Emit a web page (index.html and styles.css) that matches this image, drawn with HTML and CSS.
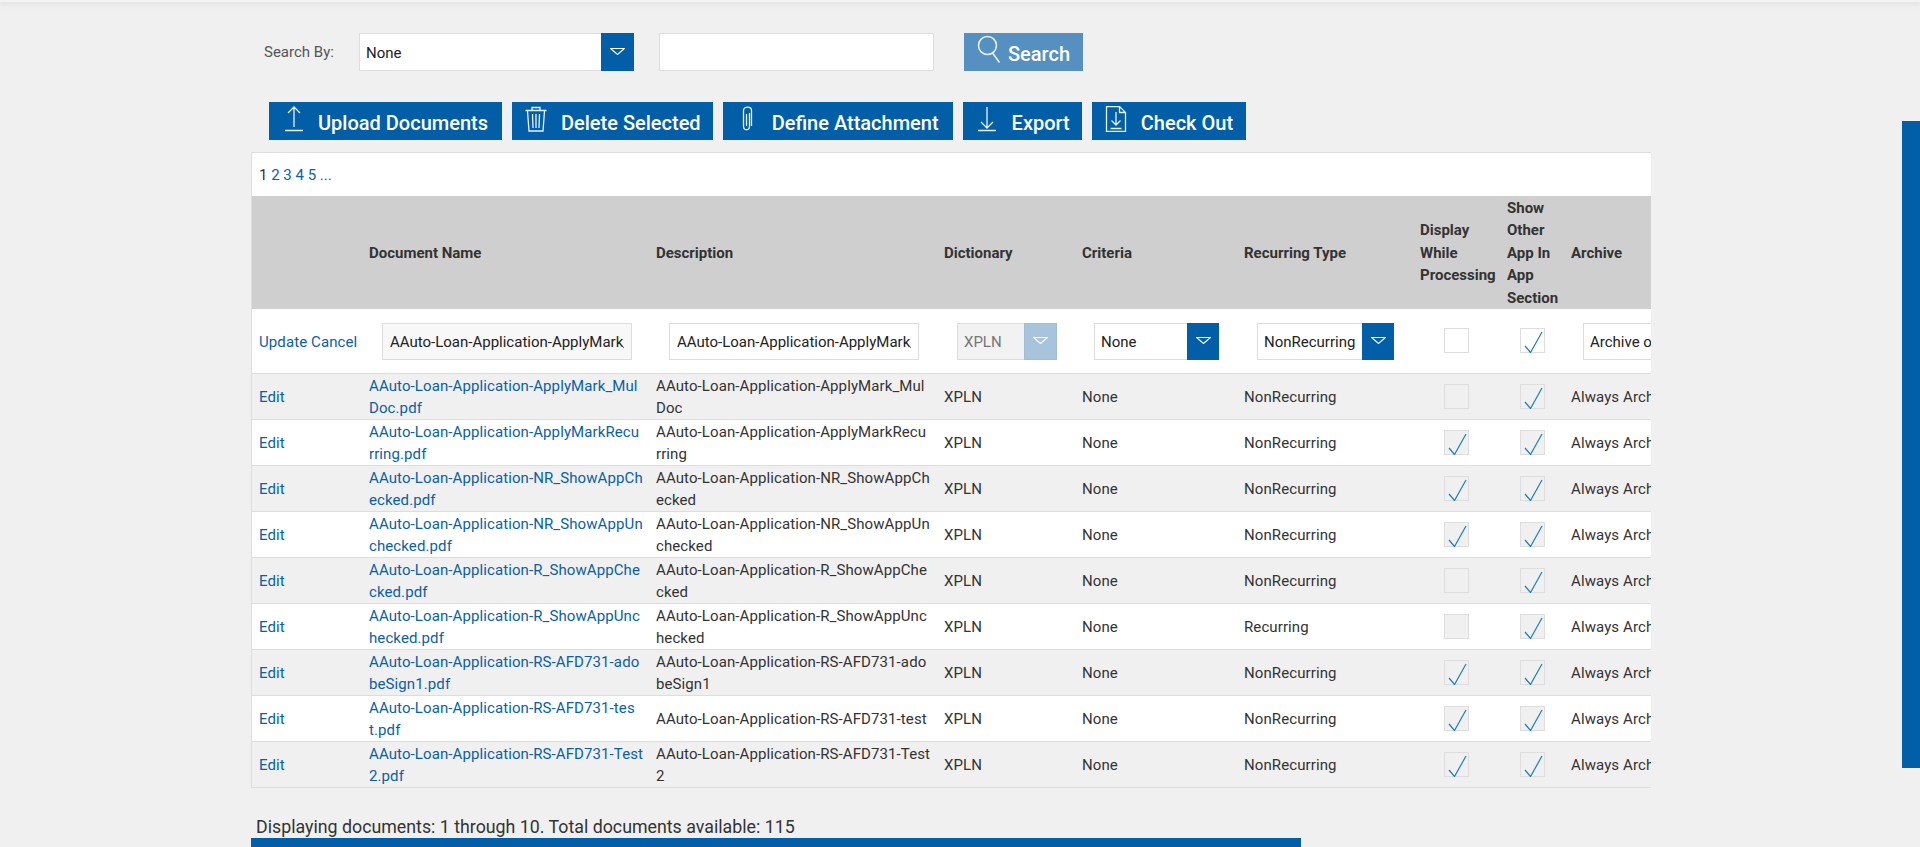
FILE: index.html
```html
<!DOCTYPE html>
<html lang="en">
<head>
<meta charset="utf-8">
<title>Documents</title>
<link rel="stylesheet" href="styles.css">
</head>
<body>
<div class="topbar"></div>
<div class="vscroll"></div>
<main class="main">
  <form class="search-row">
    <span class="search-label">Search By:</span>
    <div class="select select-search"><span class="select-text">None</span><span class="select-arrow"><svg class="tri" viewBox="0 0 15 7"><path d="M.5.5h14L7.500 6.500z"/></svg></span></div>
    <input class="text-input search-input" type="text">
    <button class="btn btn-search" type="button"><svg class="search-icon" viewBox="0 0 24 28"><circle cx="10.500" cy="10.500" r="9"/><path d="M15.500 18l7 9.500"/></svg><span>Search</span></button>
  </form>

  <div class="toolbar">
    <button class="btn btn-action btn-wide" type="button"><span class="slot"><svg viewBox="0 0 26 26"><path d="M13 1v20M7 7l6-6 6 6M4 24.500h18"/></svg></span><span>Upload Documents</span></button>
    <button class="btn btn-action" type="button"><span class="slot"><svg viewBox="0 0 26 26"><path d="M2.500 4.500h21M9 4V1.500h8V4M4.500 5l1.500 20h14l1.500-20M9.500 8l.5 14M13 8v14M16.500 8l-.5 14"/></svg></span><span>Delete Selected</span></button>
    <button class="btn btn-action btn-wide" type="button"><span class="slot"><svg viewBox="0 0 26 26"><path d="M15.500 7v13c0 5-6 5-6 0V4.500c0-4.500 8-4.500 8 0V20M12.500 8v12"/></svg></span><span>Define Attachment</span></button>
    <button class="btn btn-action" type="button"><span class="slot"><svg viewBox="0 0 26 26"><path d="M13 1v21M7 16l6 6 6-6M4 24.500h18"/></svg></span><span>Export</span></button>
    <button class="btn btn-action" type="button"><span class="slot"><svg viewBox="0 0 26 26"><path d="M3.500 25.500V.5h13l6 6v19zM16.500.5v6h6M13 6v13M8.500 14.500L13 19l4.500-4.500M7.500 22.500h11"/></svg></span><span>Check Out</span></button>
  </div>

  <section class="panel">
    <div class="pager"><span>1</span> <a href="#">2</a> <a href="#">3</a> <a href="#">4</a> <a href="#">5</a> <a href="#">...</a></div>
    <table class="grid">
      <colgroup>
        <col class="c-act"><col class="c-name"><col class="c-desc"><col class="c-dict"><col class="c-crit"><col class="c-rec"><col class="c-disp"><col class="c-show"><col class="c-arch">
      </colgroup>
      <thead>
        <tr>
          <th></th><th>Document Name</th><th>Description</th><th>Dictionary</th><th>Criteria</th><th>Recurring Type</th><th>Display While Processing</th><th>Show Other App In App Section</th><th>Archive</th>
        </tr>
      </thead>
      <tbody>
        <tr class="edit-row">
          <td><a href="#">Update</a> <a href="#">Cancel</a></td>
          <td><input class="text-input cell-input input-tint" type="text" value="AAuto-Loan-Application-ApplyMark_MulDoc"></td>
          <td><input class="text-input cell-input" type="text" value="AAuto-Loan-Application-ApplyMark_MulDoc"></td>
          <td><div class="select select-dict is-disabled"><span class="select-text">XPLN</span><span class="select-arrow"><svg class="tri" viewBox="0 0 15 7"><path d="M.5.5h14L7.500 6.500z"/></svg></span></div></td>
          <td><div class="select select-crit"><span class="select-text">None</span><span class="select-arrow"><svg class="tri" viewBox="0 0 15 7"><path d="M.5.5h14L7.500 6.500z"/></svg></span></div></td>
          <td><div class="select select-rec"><span class="select-text">NonRecurring</span><span class="select-arrow"><svg class="tri" viewBox="0 0 15 7"><path d="M.5.5h14L7.500 6.500z"/></svg></span></div></td>
          <td class="center"><span class="check check-open"></span></td>
          <td class="center"><span class="check check-open"><svg class="tick" viewBox="0 0 25 25"><path d="M5 18l5.500 6.500L22 4"/></svg></span></td>
          <td><div class="select select-arch"><span class="select-text">Archive on Completion</span></div></td>
        </tr>
        <tr>
          <td><a href="#">Edit</a></td><td class="nowrap"><a href="#">AAuto-Loan-Application-ApplyMark_Mul<br>Doc.pdf</a></td><td class="nowrap">AAuto-Loan-Application-ApplyMark_Mul<br>Doc</td><td>XPLN</td><td>None</td><td>NonRecurring</td>
          <td class="center"><span class="check"></span></td>
          <td class="center"><span class="check"><svg class="tick" viewBox="0 0 25 25"><path d="M5 18l5.500 6.500L22 4"/></svg></span></td>
          <td class="nowrap">Always Archive</td>
        </tr>
        <tr>
          <td><a href="#">Edit</a></td><td class="nowrap"><a href="#">AAuto-Loan-Application-ApplyMarkRecu<br>rring.pdf</a></td><td class="nowrap">AAuto-Loan-Application-ApplyMarkRecu<br>rring</td><td>XPLN</td><td>None</td><td>NonRecurring</td>
          <td class="center"><span class="check"><svg class="tick" viewBox="0 0 25 25"><path d="M5 18l5.500 6.500L22 4"/></svg></span></td>
          <td class="center"><span class="check"><svg class="tick" viewBox="0 0 25 25"><path d="M5 18l5.500 6.500L22 4"/></svg></span></td>
          <td class="nowrap">Always Archive</td>
        </tr>
        <tr>
          <td><a href="#">Edit</a></td><td class="nowrap"><a href="#">AAuto-Loan-Application-NR_ShowAppCh<br>ecked.pdf</a></td><td class="nowrap">AAuto-Loan-Application-NR_ShowAppCh<br>ecked</td><td>XPLN</td><td>None</td><td>NonRecurring</td>
          <td class="center"><span class="check"><svg class="tick" viewBox="0 0 25 25"><path d="M5 18l5.500 6.500L22 4"/></svg></span></td>
          <td class="center"><span class="check"><svg class="tick" viewBox="0 0 25 25"><path d="M5 18l5.500 6.500L22 4"/></svg></span></td>
          <td class="nowrap">Always Archive</td>
        </tr>
        <tr>
          <td><a href="#">Edit</a></td><td class="nowrap"><a href="#">AAuto-Loan-Application-NR_ShowAppUn<br>checked.pdf</a></td><td class="nowrap">AAuto-Loan-Application-NR_ShowAppUn<br>checked</td><td>XPLN</td><td>None</td><td>NonRecurring</td>
          <td class="center"><span class="check"><svg class="tick" viewBox="0 0 25 25"><path d="M5 18l5.500 6.500L22 4"/></svg></span></td>
          <td class="center"><span class="check"><svg class="tick" viewBox="0 0 25 25"><path d="M5 18l5.500 6.500L22 4"/></svg></span></td>
          <td class="nowrap">Always Archive</td>
        </tr>
        <tr>
          <td><a href="#">Edit</a></td><td class="nowrap"><a href="#">AAuto-Loan-Application-R_ShowAppChe<br>cked.pdf</a></td><td class="nowrap">AAuto-Loan-Application-R_ShowAppChe<br>cked</td><td>XPLN</td><td>None</td><td>NonRecurring</td>
          <td class="center"><span class="check"></span></td>
          <td class="center"><span class="check"><svg class="tick" viewBox="0 0 25 25"><path d="M5 18l5.500 6.500L22 4"/></svg></span></td>
          <td class="nowrap">Always Archive</td>
        </tr>
        <tr>
          <td><a href="#">Edit</a></td><td class="nowrap"><a href="#">AAuto-Loan-Application-R_ShowAppUnc<br>hecked.pdf</a></td><td class="nowrap">AAuto-Loan-Application-R_ShowAppUnc<br>hecked</td><td>XPLN</td><td>None</td><td>Recurring</td>
          <td class="center"><span class="check"></span></td>
          <td class="center"><span class="check"><svg class="tick" viewBox="0 0 25 25"><path d="M5 18l5.500 6.500L22 4"/></svg></span></td>
          <td class="nowrap">Always Archive</td>
        </tr>
        <tr>
          <td><a href="#">Edit</a></td><td class="nowrap"><a href="#">AAuto-Loan-Application-RS-AFD731-ado<br>beSign1.pdf</a></td><td class="nowrap">AAuto-Loan-Application-RS-AFD731-ado<br>beSign1</td><td>XPLN</td><td>None</td><td>NonRecurring</td>
          <td class="center"><span class="check"><svg class="tick" viewBox="0 0 25 25"><path d="M5 18l5.500 6.500L22 4"/></svg></span></td>
          <td class="center"><span class="check"><svg class="tick" viewBox="0 0 25 25"><path d="M5 18l5.500 6.500L22 4"/></svg></span></td>
          <td class="nowrap">Always Archive</td>
        </tr>
        <tr>
          <td><a href="#">Edit</a></td><td class="nowrap"><a href="#">AAuto-Loan-Application-RS-AFD731-tes<br>t.pdf</a></td><td class="nowrap">AAuto-Loan-Application-RS-AFD731-test</td><td>XPLN</td><td>None</td><td>NonRecurring</td>
          <td class="center"><span class="check"><svg class="tick" viewBox="0 0 25 25"><path d="M5 18l5.500 6.500L22 4"/></svg></span></td>
          <td class="center"><span class="check"><svg class="tick" viewBox="0 0 25 25"><path d="M5 18l5.500 6.500L22 4"/></svg></span></td>
          <td class="nowrap">Always Archive</td>
        </tr>
        <tr>
          <td><a href="#">Edit</a></td><td class="nowrap"><a href="#">AAuto-Loan-Application-RS-AFD731-Test<br>2.pdf</a></td><td class="nowrap">AAuto-Loan-Application-RS-AFD731-Test<br>2</td><td>XPLN</td><td>None</td><td>NonRecurring</td>
          <td class="center"><span class="check"><svg class="tick" viewBox="0 0 25 25"><path d="M5 18l5.500 6.500L22 4"/></svg></span></td>
          <td class="center"><span class="check"><svg class="tick" viewBox="0 0 25 25"><path d="M5 18l5.500 6.500L22 4"/></svg></span></td>
          <td class="nowrap">Always Archive</td>
        </tr>
      </tbody>
    </table>
  </section>
  <p class="summary">Displaying documents: 1 through 10. Total documents available: 115</p>
  <div class="hscroll"></div>
</main>
</body>
</html>
```

FILE: styles.css
```css
* { box-sizing: border-box; }

html, body {
  margin: 0;
  height: 100%;
  overflow: hidden;
}

body {
  position: relative;
  background: #f0f0f0;
  color: #333;
  font-family: Roboto, "Liberation Sans", sans-serif;
  font-size: 15px;
  line-height: 22.4px;
}

a { color: #0a5fa5; text-decoration: none; }

.topbar {
  height: 2px;
  background: #f3f3f3;
  box-shadow: 0 1px 6px rgba(0, 0, 0, .16);
}

.vscroll {
  position: absolute;
  top: 121px;
  right: 0;
  width: 18px;
  height: 647px;
  background: #025ea7;
}

.main {
  width: 1400px;
  margin-left: 251px;
}

.search-row {
  display: flex;
  align-items: center;
  height: 38px;
  margin-top: 31px;
}

.search-label {
  width: 108px;
  padding-left: 13px;
  color: #555;
}

.select {
  display: flex;
  height: 38px;
  border: 1px solid #ddd;
  background: #fff;
  color: #222;
}

.select-text {
  flex: 1;
  min-width: 0;
  padding-left: 6px;
  line-height: 38px;
  white-space: nowrap;
  overflow: hidden;
}

.select-arrow {
  flex: none;
  width: 33px;
  margin: -1px -1px -1px 0;
  padding-top: 15px;
  background: #025ea7;
  text-align: center;
}

.tri {
  display: block;
  width: 15px;
  height: 7px;
  margin: 0 auto;
  fill: none;
  stroke: #fff;
  stroke-width: 1.2;
}

.select-search { width: 275px; }

.select-dict,
.select-crit,
.select-rec,
.select-arch { height: 37px; }

.grid .select-text {
  line-height: 36px;
  letter-spacing: 0;
}

.grid .select-arrow { padding-top: 14px; }

.select-dict { width: 100px; margin-left: 13px; }
.select-crit { width: 125px; margin-left: 12px; }
.select-rec { width: 137px; margin-left: 13px; }
.select-arch { width: 200px; margin-left: 12px; }

.select-crit .select-arrow,
.select-rec .select-arrow { width: 32px; }

.is-disabled { background: #f2f2f2; color: #777; }
.is-disabled .select-arrow {
  border: 1px solid #9fbdd6;
  background: #a8c4dc;
}

.is-disabled .tri { margin-top: -1px; }

.text-input {
  height: 38px;
  border: 1px solid #ddd;
  border-radius: 0;
  outline: 0;
  background: #fff;
  color: #222;
  font: 15px Roboto, "Liberation Sans", sans-serif;
  padding: 2px 7px 0;
}

.search-input {
  width: 275px;
  margin-left: 25px;
}

.btn {
  display: flex;
  align-items: center;
  height: 38px;
  border: 0;
  padding: 0;
  background: #025ea7;
  color: #fff;
  font: 500 20px Roboto, "Liberation Sans", sans-serif;
  white-space: nowrap;
}

.btn span:last-child { margin-top: 4px; }

.btn-search {
  width: 119px;
  margin-left: 30px;
  padding-left: 13px;
  background: #5590c0;
}

.search-icon {
  width: 24px;
  height: 28px;
  margin: -6px 7px 0 0;
  fill: none;
  stroke: #e3eef7;
  stroke-width: 1.6;
}

.toolbar {
  display: flex;
  gap: 10px;
  margin: 31px 0 12px 18px;
}

.btn-action { padding-right: 12px; }
.btn-wide { padding-right: 14px; }
.btn-action:last-child { padding-right: 13px; }

.slot {
  display: flex;
  justify-content: center;
  width: 49px;
  margin-bottom: 4px;
}

.slot svg {
  display: block;
  width: 26px;
  height: 26px;
  fill: none;
  stroke: #e6f1fa;
  stroke-width: 1.3;
}

.panel {
  border: 1px solid #ddd;
  border-right: 0;
  border-bottom: 0;
  overflow: hidden;
}

.pager {
  height: 43px;
  padding: 10px 7px 0;
  background: #fff;
  line-height: 24px;
}

.grid {
  width: 1422px;
  table-layout: fixed;
  border-collapse: collapse;
}

.c-act { width: 110px; }
.c-name { width: 287px; }
.c-desc { width: 288px; }
.c-dict { width: 138px; }
.c-crit { width: 162px; }
.c-rec { width: 176px; }
.c-disp { width: 87px; }
.c-show { width: 64px; }
.c-arch { width: 110px; }

.grid th {
  height: 113px;
  padding: 1px 7px 0;
  background: #cfcfcf;
  font-weight: 700;
  line-height: 22.4px;
  text-align: left;
}

.grid td {
  height: 46px;
  padding: 1px 4px 0 7px;
  border-bottom: 1px solid #ddd;
  background: #f0f0f0;
  letter-spacing: .1px;
  line-height: 22px;
  vertical-align: middle;
}

.grid tbody tr:nth-child(odd) td { background: #fff; }
.grid .edit-row td { height: 64px; padding-right: 0; }
.grid .edit-row td:first-child { padding-top: 3px; }
.grid td.center { padding: 0; text-align: center; }

.nowrap { white-space: nowrap; }

.cell-input {
  display: block;
  width: 250px;
  height: 37px;
  margin-left: 13px;
}

.input-tint { background: #f8f8f8; }

.check {
  display: inline-block;
  position: relative;
  width: 25px;
  height: 25px;
  border: 1px solid #ddd;
  background: #f0f0f0;
  vertical-align: middle;
}

.check-open { background: #fff; }

.tick {
  position: absolute;
  top: -1px;
  left: -1px;
  width: 25px;
  height: 25px;
  fill: none;
  stroke: #1c7cc0;
  stroke-width: 1.2;
}

.summary {
  margin: 27px 0 0 5px;
  height: 23px;
  color: #333;
  font-size: 17.8px;
  line-height: 23px;
}

.hscroll {
  width: 1050px;
  height: 9px;
  background: #025ea7;
}
```
